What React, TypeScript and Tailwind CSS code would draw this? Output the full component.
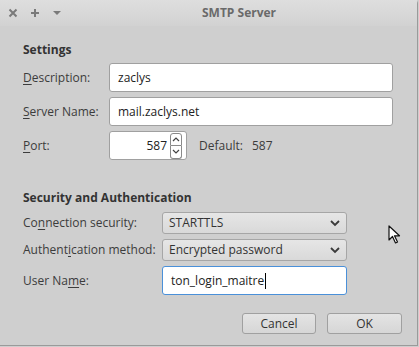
import React from 'react';

const font = { fontFamily: '"Open Sans", "Noto Sans", sans-serif' };

function Label({ pre, u, post, className = '' }: { pre: string; u: string; post: string; className?: string }) {
  return (
    <span className={className}>
      {pre}
      <span className="underline underline-offset-2">{u}</span>
      {post}
    </span>
  );
}

function Chevron() {
  return (
    <svg width="12" height="8" viewBox="0 0 12 8" className="shrink-0">
      <path d="M2 2 L6 6 L10 2" fill="none" stroke="#3a3a3a" strokeWidth="1.8" />
    </svg>
  );
}

function Select({ value }: { value: string }) {
  return (
    <div className="flex h-[22px] w-[185px] items-center justify-between rounded-[3px] border border-[#a6a6a6] bg-gradient-to-b from-[#e6e6e6] to-[#d9d9d9] pl-[6px] pr-[5px] text-[#333]">
      <span>{value}</span>
      <Chevron />
    </div>
  );
}

function Cursor() {
  return (
    <svg width="14" height="20" viewBox="0 0 14 20" className="absolute left-[388px] top-[225px]">
      <path d="M1 1 L1 15 L4.5 11.5 L7.5 18 L9.5 17 L6.5 10.8 L11.5 10.8 Z" fill="#fff" stroke="#111" strokeWidth="1.2" strokeLinejoin="round" />
    </svg>
  );
}

export default function App() {
  return (
    <div className="relative h-[347px] w-[419px] overflow-hidden bg-[#cecece] text-[12px] text-[#3c3c3c]" style={font}>
      <div className="h-[346px] w-[418px] rounded-tl-[4px] rounded-tr-[4px] border-b border-r border-[#9a9a9a] bg-[#cfcfcf]">
        {/* Title bar */}
        <div className="relative flex h-[26px] items-center bg-gradient-to-b from-[#dedede] to-[#d2d2d2] text-[#777]">
          <div className="flex items-center gap-[12px] pl-[8px]">
            <svg width="10" height="10" viewBox="0 0 10 10">
              <path d="M1.5 1.5 L8.5 8.5 M8.5 1.5 L1.5 8.5" stroke="#7a7a7a" strokeWidth="2" />
            </svg>
            <svg width="10" height="10" viewBox="0 0 10 10">
              <path d="M5 1 L5 9 M1 5 L9 5" stroke="#7a7a7a" strokeWidth="2" />
            </svg>
            <svg width="10" height="10" viewBox="0 0 10 10">
              <path d="M1 3 L9 3 L5 7 Z" fill="#7a7a7a" />
            </svg>
          </div>
          <div className="absolute left-[202px] top-[4px] font-bold text-[#6a6a6a]">SMTP Server</div>
        </div>

        <div className="flex flex-col pl-[23px]">
          {/* Settings */}
          <div className="mt-[16px] font-bold leading-[16px] text-[#333]">Settings</div>
          <div className="mt-[5px] flex flex-col gap-[5px]">
            <div className="flex items-center">
              <Label pre="" u="D" post="escription:" className="w-[86px]" />
              <div className="flex h-[29px] w-[284px] items-center rounded-[3px] border border-[#a0a0a0] bg-white pl-[8px] text-[#222]">zaclys</div>
            </div>
            <div className="flex items-center">
              <Label pre="" u="S" post="erver Name:" className="w-[86px]" />
              <div className="flex h-[29px] w-[284px] items-center rounded-[3px] border border-[#a0a0a0] bg-white pl-[8px] text-[#222]">mail.zaclys.net</div>
            </div>
            <div className="flex items-center">
              <Label pre="" u="P" post="ort:" className="w-[86px]" />
              <div className="flex h-[29px] w-[78px] items-center justify-end rounded-[3px] border border-[#a0a0a0] bg-white pr-[4px] text-[#222]">
                <span className="mr-[3px]">587</span>
                <div className="flex flex-col">
                  <div className="flex h-[13px] w-[12px] items-center justify-center rounded-t-[3px] border border-[#8a8a8a]">
                    <svg width="8" height="5" viewBox="0 0 8 5"><path d="M1 4 L4 1 L7 4" fill="none" stroke="#444" strokeWidth="1.2" /></svg>
                  </div>
                  <div className="flex h-[13px] w-[12px] items-center justify-center rounded-b-[3px] border border-t-0 border-[#8a8a8a]">
                    <svg width="8" height="5" viewBox="0 0 8 5"><path d="M1 1 L4 4 L7 1" fill="none" stroke="#444" strokeWidth="1.2" /></svg>
                  </div>
                </div>
              </div>
              <span className="ml-[12px]">Default:</span>
              <span className="ml-[9px]">587</span>
            </div>
          </div>

          {/* Security */}
          <div className="mt-[30px] font-bold leading-[16px] text-[#333]">Security and Authentication</div>
          <div className="mt-[6px] flex flex-col gap-[5px]">
            <div className="flex items-center">
              <Label pre="Co" u="n" post="nection security:" className="w-[139px]" />
              <Select value="STARTTLS" />
            </div>
            <div className="flex items-center">
              <Label pre="Authent" u="i" post="cation method:" className="w-[139px]" />
              <Select value="Encrypted password" />
            </div>
            <div className="flex items-center">
              <Label pre="User Na" u="m" post="e:" className="w-[139px]" />
              <div className="flex h-[29px] w-[185px] items-center rounded-[3px] border border-[#4a90d9] bg-white pl-[8px] text-[#222]">
                ton_login_maitre<span className="ml-[1px] inline-block h-[16px] w-px bg-black" />
              </div>
            </div>
          </div>

          {/* Buttons */}
          <div className="mt-[18px] flex justify-end gap-[11px] pr-[15px]">
            <div className="flex h-[21px] w-[74px] items-center justify-center rounded-[3px] border border-[#a0a0a0] bg-gradient-to-b from-[#e4e4e4] to-[#d6d6d6] text-[#333]">Cancel</div>
            <div className="flex h-[21px] w-[75px] items-center justify-center rounded-[3px] border border-[#a0a0a0] bg-gradient-to-b from-[#e4e4e4] to-[#d6d6d6] text-[#333]">OK</div>
          </div>
        </div>
      </div>
      <Cursor />
    </div>
  );
}
